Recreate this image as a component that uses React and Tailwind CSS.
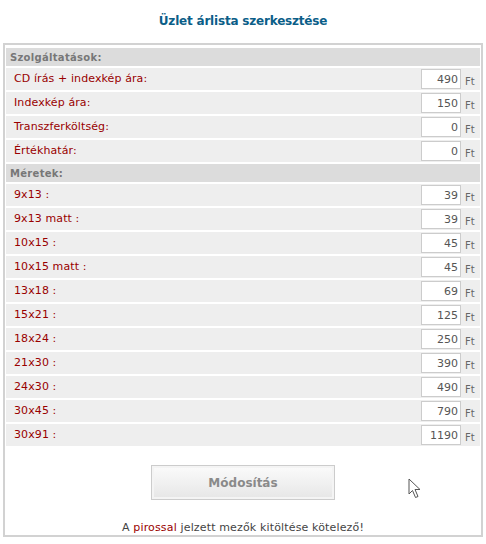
import React from 'react';

const services = [
    { label: 'CD írás + indexkép ára:', value: '490' },
    { label: 'Indexkép ára:', value: '150' },
    { label: 'Transzferköltség:', value: '0' },
    { label: 'Értékhatár:', value: '0' },
];

const sizes = [
    { label: '9x13 :', value: '39' },
    { label: '9x13 matt :', value: '39' },
    { label: '10x15 :', value: '45' },
    { label: '10x15 matt :', value: '45' },
    { label: '13x18 :', value: '69' },
    { label: '15x21 :', value: '125' },
    { label: '18x24 :', value: '250' },
    { label: '21x30 :', value: '390' },
    { label: '24x30 :', value: '490' },
    { label: '30x45 :', value: '790' },
    { label: '30x91 :', value: '1190' },
];

const font = { fontFamily: '"DejaVu Sans", Verdana, sans-serif' };

const SectionHeader = ({ title }) => (
    <div className="h-[18px] bg-[#dcdcdc] pl-[4px] flex items-center text-[10px] font-bold text-[#777777] tracking-[0.3px]">
        {title}
    </div>
);

const PriceRow = ({ label, value }) => (
    <div className="h-[22px] bg-[#eeeeee] flex items-center">
        <span className="flex-1 pl-[8px] text-[11px] text-[#990000] tracking-[0.1px]">{label}</span>
        <input
            readOnly
            value={value}
            className="w-[40px] h-[20px] bg-white border border-[#cccccc] text-right pr-[2px] text-[11px] text-[#555555] outline-none"
            style={font}
        />
        <span className="w-[19px] pl-[4px] pt-[4px] text-[10px] text-[#666666]">Ft</span>
    </div>
);

export default function App() {
    return (
        <div className="relative w-[486px] h-[544px] bg-white" style={font}>
            <h1 className="h-[43px] pt-[12px] text-center text-[12px] font-bold text-[#0b5e88] tracking-[-0.2px]">
                Üzlet árlista szerkesztése
            </h1>

            <div className="mx-[3px] border-2 border-[#d2d2d2] px-px pt-[3px] h-[494px]">
                <div className="flex flex-col gap-[2px]">
                    <SectionHeader title="Szolgáltatások:" />
                    {services.map(s => <PriceRow key={s.label} {...s} />)}
                    <SectionHeader title="Méretek:" />
                    {sizes.map(s => <PriceRow key={s.label} {...s} />)}
                </div>

                <div className="flex justify-center pt-[19px]">
                    <button className="w-[184px] h-[35px] border border-[#cccccc] bg-gradient-to-b from-[#fbfbfb] to-[#e6e6e6] shadow-[inset_0_0_0_2px_#f4f4f4] text-[12px] font-bold text-[#8a8a8a]">
                        Módosítás
                    </button>
                </div>

                <p className="pt-[20px] text-center text-[11px] text-[#444444] tracking-[0.15px]">
                    A <span className="text-[#990000]">pirossal</span> jelzett mezők kitöltése kötelező!
                </p>
            </div>

            {/* mouse pointer captured in the screenshot */}
            <svg className="absolute left-[408px] top-[478px]" width="14" height="22" viewBox="0 0 14 22">
                <path d="M1 1 L1 16 L4.5 12.5 L7.5 19.5 L10 18.5 L7 11.5 L12 11.5 Z" fill="white" stroke="#555555" strokeWidth="1" strokeLinejoin="round" />
            </svg>
        </div>
    );
}
